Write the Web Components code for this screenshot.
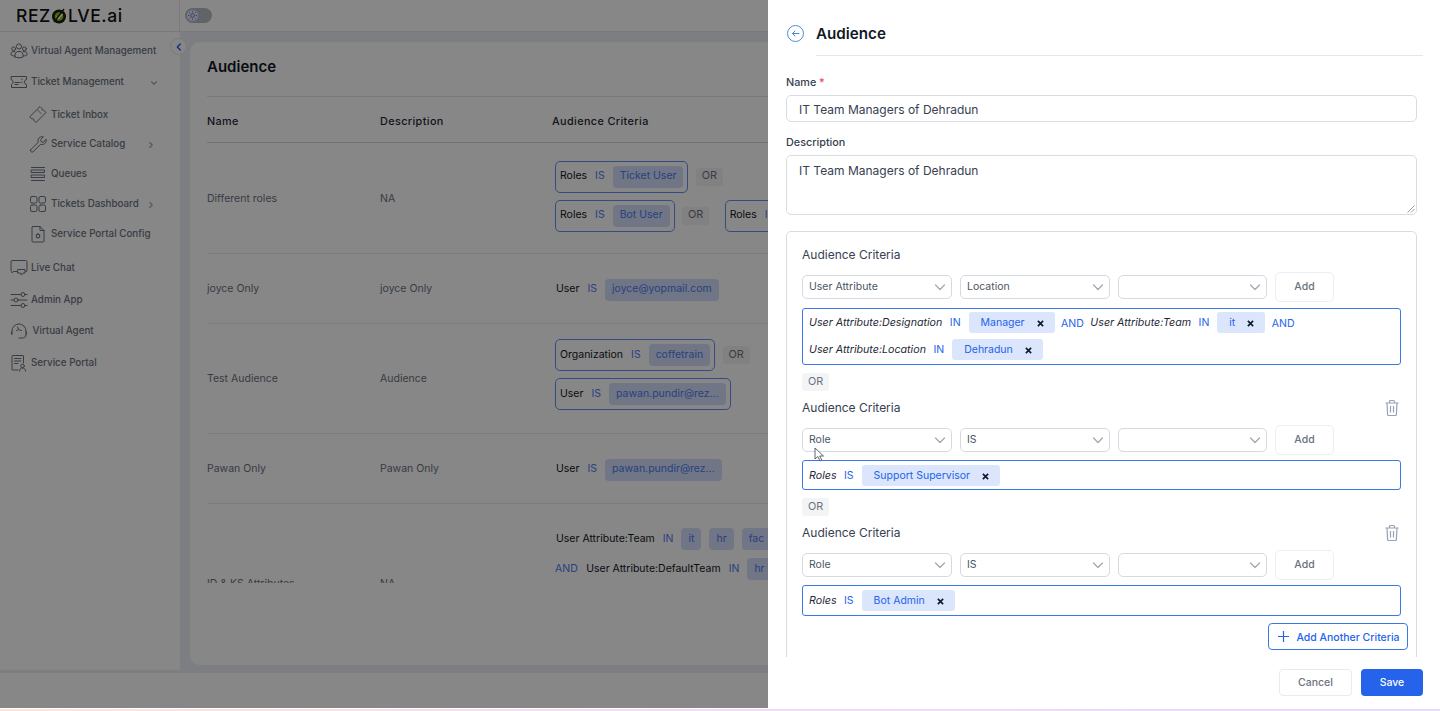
<!DOCTYPE html>
<html>
<head>
<meta charset="utf-8">
<title>Audience</title>
<style>
	html, body { margin: 0; height: 100%; overflow: hidden; font-family: Inter, "Liberation Sans", sans-serif; }
	.and { color: #4f7bef; }
</style>
</head>
<body>
<rz-app>
	<rz-sidebar slot="sidebar">
		<rz-nav icon="people" label="Virtual Agent Management"></rz-nav>
		<rz-nav icon="ticket" label="Ticket Management" caret="down"></rz-nav>
		<rz-nav icon="tag" label="Ticket Inbox" child before="1.500"></rz-nav>
		<rz-nav icon="wrench" label="Service Catalog" child caret="right"></rz-nav>
		<rz-nav icon="queues" label="Queues" child></rz-nav>
		<rz-nav icon="grid" label="Tickets Dashboard" child caret="right"></rz-nav>
		<rz-nav icon="doc" label="Service Portal Config" child></rz-nav>
		<rz-nav icon="chat" label="Live Chat" before="4"></rz-nav>
		<rz-nav icon="sliders" label="Admin App"></rz-nav>
		<rz-nav icon="agent" label="Virtual Agent" nudge="1.500"></rz-nav>
		<rz-nav icon="portal" label="Service Portal"></rz-nav>
	</rz-sidebar>

	<rz-table slot="main">
		<rz-row name="Different roles" desc="NA" h="111" lift="6">
			<div class="line"><rz-rule boxed attr="Roles" values="Ticket User"></rz-rule><rz-or></rz-or></div>
			<div class="line"><rz-rule boxed attr="Roles" values="Bot User"></rz-rule><rz-or spaced></rz-or><rz-rule boxed attr="Roles" values=""></rz-rule></div>
		</rz-row>
		<rz-row name="joyce Only" desc="joyce Only" h="70">
			<div class="line"><rz-rule attr="User" values="joyce@yopmail.com"></rz-rule></div>
		</rz-row>
		<rz-row name="Test Audience" desc="Audience" h="110" lift="10">
			<div class="line"><rz-rule boxed attr="Organization" values="coffetrain"></rz-rule><rz-or></rz-or></div>
			<div class="line"><rz-rule boxed attr="User" values="pawan.pundir@rez..."></rz-rule></div>
		</rz-row>
		<rz-row name="Pawan Only" desc="Pawan Only" h="70">
			<div class="line"><rz-rule attr="User" values="pawan.pundir@rez..."></rz-rule></div>
		</rz-row>
		<rz-row name="ID &amp; KS Attributes" desc="NA" h="160" top="22">
			<div class="line"><rz-rule attr="User Attribute:Team" op="IN" values="it|hr|fac"></rz-rule></div>
			<div class="line"><span class="and">AND</span><rz-rule attr="User Attribute:DefaultTeam" op="IN" values="hr"></rz-rule></div>
		</rz-row>
	</rz-table>
</rz-app>

<rz-drawer>
	<rz-criteria heading="Audience Criteria" first="User Attribute" second="Location" h="57">
		<rz-tag attr="User Attribute:Designation" op="IN" value="Manager"></rz-tag>
		<span class="join">AND</span>
		<rz-tag attr="User Attribute:Team" op="IN" value="it"></rz-tag>
		<span class="join">AND</span>
		<rz-tag attr="User Attribute:Location" op="IN" value="Dehradun"></rz-tag>
	</rz-criteria>
	<rz-or plain></rz-or>
	<rz-criteria heading="Audience Criteria" first="Role" second="IS" h="30" removable>
		<rz-tag attr="Roles" op="IS" value="Support Supervisor"></rz-tag>
	</rz-criteria>
	<rz-or plain></rz-or>
	<rz-criteria heading="Audience Criteria" first="Role" second="IS" h="31" removable>
		<rz-tag attr="Roles" op="IS" value="Bot Admin"></rz-tag>
	</rz-criteria>
</rz-drawer>

<script>
const ICONS = {
	people: '<circle cx="9" cy="4.500" r="2.600"/><circle cx="3.600" cy="6.800" r="1.900"/><circle cx="14.400" cy="6.800" r="1.900"/><path d="M5 15c-.6-3.400 1-5.600 4-5.600s4.600 2.200 4 5.600c-2.600 1.100-5.400 1.100-8 0z"/><path d="M5 9.700H3C1.500 9.700.7 11 1 13c.8.600 2 .9 3.600.9M13 9.700h2c1.500 0 2.300 1.300 2 3.300-.8.600-2 .9-3.600.9"/>',
	ticket: '<path d="M1.500 3.500h15v3.200c-1.200 0-2 .9-2 2.300s.8 2.300 2 2.300v3.200h-15v-3.200c1 0 1.500-1 1.500-2.300s-.5-2.300-1.500-2.300z"/><path d="M5 9.500h5M5 11.500h3M12 6v.8M12 9v.8"/>',
	tag: '<path d="M1 11.500L11 1.500l2.200 2.200c-.5 1.100.3 2 1.400 1.500L17 7.500 7 17.500l-2.200-2.200c.5-1.200-.5-2-1.500-1.500z"/><path d="M9 5.500l1 1M11 7.500l1 1"/>',
	wrench: '<path d="M1.500 15L9.200 7.400c-.7-2.300.2-4.600 2.300-5.400 1-.4 2-.4 2.900-.1l-2.700 2.600.5 2.300 2.300.5L17 4.200c.4 1 .3 2.200-.2 3.100-1 1.900-3.200 2.700-5.200 2l-7.700 7.700c-1 .9-3.200-.9-2.400-2z"/>',
	queues: '<path d="M2.500 2.500h13M2.500 5h13v2.500h-13zM2.500 10h13v2.500h-13zM2.500 15.500h13"/>',
	grid: '<rect x="1.500" y="1.500" width="6.500" height="6.500" rx="1.500"/><rect x="10" y="1.500" width="6.500" height="6.500" rx="1.500"/><rect x="1.500" y="10" width="6.500" height="6.500" rx="1.500"/><rect x="10" y="10" width="6.500" height="6.500" rx="1.500"/>',
	doc: '<path d="M4 1.500h7l4 4v10.500a1 1 0 0 1-1 1H4a1 1 0 0 1-1-1v-13.500a1 1 0 0 1 1-1z"/><path d="M11 1.500v4h4"/><path d="M9 8.500l.7 1.200h1.300l-.6 1.300.6 1.300H9.700L9 13.500l-.7-1.200H7l.6-1.300-.6-1.300h1.300z"/>',
	chat: '<path d="M2.500 1.500h13a1.500 1.500 0 0 1 1.500 1.500v8a1.500 1.500 0 0 1-1.500 1.500H16M7 12.500H3.500l-1.500 1.500V12.500a1.500 1.500 0 0 1-1-1.500V3a1.500 1.500 0 0 1 1.500-1.500"/><path d="M8 10.500h7v3.500h-2l-1.500 2-1-2H8z"/>',
	sliders: '<path d="M1 3.500h10M15 3.500h2M1 9h3M8 9h9M1 14.500h10M15 14.500h2"/><circle cx="13" cy="3.500" r="2"/><circle cx="6" cy="9" r="2"/><circle cx="13" cy="14.500" r="2"/>',
	agent: '<path d="M2 12V9a7 7 0 0 1 14 0v3"/><path d="M2 9.500c-1 .6-1 2.600 0 3.200M16 9.500c1 .6 1 2.600 0 3.200M16 13c0 2-1.500 3-4 3H9"/><path d="M6.500 8.500l1.500-.5M10 8l1.500.5M7.500 5l1.500 3"/>',
	portal: '<path d="M13.500 9V2a.5.500 0 0 0-.5-.5H2.500A.5.500 0 0 0 2 2v13.500a.5.500 0 0 0 .5.500H8"/><path d="M4.500 4.500h6.500M4.500 7h6.500M4.500 9.500h3.500"/><circle cx="12.500" cy="12" r="1.800"/><path d="M9.500 17c0-2 1.300-3 3-3s3 1 3 3"/>'
};

const chevron = (d, size, color, width) => `<svg width="${size}" height="${size}" viewBox="0 0 12 12" fill="none" stroke="${color}" stroke-width="${width || 1.300}" stroke-linecap="round" stroke-linejoin="round"><path d="${d}"/></svg>`;

class RzApp extends HTMLElement {
	constructor() {
		super();
		this.attachShadow({ mode: 'open' });
		this.shadowRoot.innerHTML = `
			<style>
				:host { display: flex; flex-direction: column; height: 711px; background: #ebeef5; color: #111827; }
				.top { flex: 0 0 31px; display: flex; background: #fff; border-bottom: 1px solid #e5e7eb; }
				.brand { flex: 0 0 180px; box-sizing: border-box; padding-left: 16px; border-right: 1px solid #e8e9ec; display: flex; align-items: center;
					font: 500 17.500px/1 Inter, "Liberation Sans", sans-serif; color: #111; letter-spacing: .6px; }
				.brand svg { margin: 0 1px 0 0; }
				.toggle-wrap { padding: 8px 0 0 5px; }
				.toggle { width: 27px; height: 15px; border-radius: 8px; background: #b7bcc5; display: flex; align-items: center; padding-left: 2px; box-sizing: border-box; }
				.knob { width: 11px; height: 11px; border-radius: 50%; background: #e8ecf8; display: flex; align-items: center; justify-content: center; }
				.mid { height: 639px; flex: none; display: flex; }
				.collapse { position: absolute; left: 170px; top: 38px; width: 17px; height: 17px; border-radius: 50%; background: #fff; border: 1px solid #e5e7eb; box-sizing: border-box; display: flex; align-items: center; justify-content: center; }
				.bottom { flex: 0 0 36px; margin-top: 2px; background: #fff; }
				.strip { flex: 0 0 3px; background: linear-gradient(90deg, #fbe6dc, #f0dcf4 50%, #e6dcf8); }
				.veil { position: absolute; left: 0; top: 0; right: 0; height: 708px; background: rgba(0, 0, 0, .47); }
			</style>
			<div class="top">
				<div class="brand">REZ<svg width="16" height="18" viewBox="0 0 16 18"><circle cx="8" cy="9.500" r="7" fill="#16210f"/><circle cx="8" cy="9.500" r="4.300" fill="#8fc31f"/><path d="M5.500 9.500l2 2 4-4.500" fill="none" stroke="#fff" stroke-width="1.400"/><path d="M3 15L13 2" stroke="#16210f" stroke-width="1.300"/></svg>LVE.ai</div>
				<div class="toggle-wrap"><div class="toggle"><div class="knob"><svg width="9" height="9" viewBox="0 0 10 10" fill="none" stroke="#4f6fd8" stroke-width="1"><circle cx="5" cy="5" r="2"/><path d="M5 0v1.500M5 8.500V10M0 5h1.500M8.500 5H10M1.500 1.500l1 1M7.500 7.500l1 1M8.500 1.500l-1 1M2.500 7.500l-1 1"/></svg></div></div></div>
			</div>
			<div class="mid"><slot name="sidebar"></slot><slot name="main"></slot></div>
			<div class="collapse">${chevron('M7.500 2.500L4 6l3.500 3.500', 10, '#2563eb', 1.800)}</div>
			<div class="bottom"></div>
			<div class="strip"></div>
			<div class="veil"></div>
		`;
	}
}
customElements.define('rz-app', RzApp);

class RzSidebar extends HTMLElement {
	constructor() {
		super();
		this.attachShadow({ mode: 'open' });
		this.shadowRoot.innerHTML = `
			<style>
				:host { display: block; flex: 0 0 180px; box-sizing: border-box; background: #fff; padding-top: 3px; height: 638px; }
			</style>
			<slot></slot>
		`;
	}
}
customElements.define('rz-sidebar', RzSidebar);

class RzNav extends HTMLElement {
	connectedCallback() {
		const child = this.hasAttribute('child');
		const caret = this.getAttribute('caret');
		const icon = ICONS[this.getAttribute('icon')];
		let caretSvg = '';
		if (caret === 'down') caretSvg = chevron('M3 4.500l3 3 3-3', 10, '#9ca3af');
		if (caret === 'right') caretSvg = chevron('M4.500 3l3 3-3 3', 10, '#9ca3af');
		this.attachShadow({ mode: 'open' }).innerHTML = `
			<style>
				:host { display: block; margin-top: ${this.getAttribute('before') || 0}px; }
				.item { display: flex; align-items: center; height: ${child ? 29.800 : 31.500}px; padding-left: ${child ? 29 : 10}px; gap: ${child ? 4 : 3}px; position: relative;
					font: 500 9.800px/1 Inter, "Liberation Sans", sans-serif; color: #6b7280; }
				.item > span:first-of-type { margin-left: ${this.getAttribute('nudge') || 0}px; }
				svg.ic { flex: none; width: 18px; height: 18px; fill: none; stroke: #6b7280; stroke-width: 1; stroke-linecap: round; stroke-linejoin: round; }
				.caret { position: absolute; right: ${caret === 'down' ? 21 : 24}px; top: 50%; margin-top: -4px; line-height: 0; }
			</style>
			<div class="item"><svg class="ic" viewBox="0 0 18 18">${icon}</svg><span>${this.getAttribute('label')}</span><span class="caret">${caretSvg}</span></div>
		`;
	}
}
customElements.define('rz-nav', RzNav);

class RzTable extends HTMLElement {
	constructor() {
		super();
		this.attachShadow({ mode: 'open' });
		this.shadowRoot.innerHTML = `
			<style>
				:host { display: block; flex: 0 0 588px; box-sizing: border-box; overflow: hidden; padding: 10px 0 0 10px; }
				.card { background: #fff; border-radius: 10px 0 0 10px; height: 623px; box-sizing: border-box; padding: 0 0 0 17px; overflow: hidden; }
				h2 { margin: 0; height: 55px; padding-bottom: 6px; display: flex; align-items: center; font: 600 15px/1 Inter, "Liberation Sans", sans-serif; color: #111827; border-bottom: 1px solid #e5e7eb; box-sizing: border-box; }
				.head { display: grid; grid-template-columns: 173px 172px 1fr; height: 46px; padding-top: 5px; align-items: center; border-bottom: 1px solid #d1d5db; box-sizing: border-box;
					font: 500 10.800px/1 Inter, "Liberation Sans", sans-serif; color: #1f2937; letter-spacing: .4px; }
				.rows { height: 440px; overflow: hidden; }
			</style>
			<div class="card">
				<h2>Audience</h2>
				<div class="head"><span>Name</span><span>Description</span><span>Audience Criteria</span></div>
				<div class="rows"><slot></slot></div>
			</div>
		`;
	}
}
customElements.define('rz-table', RzTable);

class RzRow extends HTMLElement {
	connectedCallback() {
		const top = this.getAttribute('top');
		this.attachShadow({ mode: 'open' }).innerHTML = `
			<style>
				:host { display: grid; grid-template-columns: 173px 172px 1fr; height: ${this.getAttribute('h')}px; box-sizing: border-box; padding-top: 2px; border-bottom: 1px solid #e9eaee; align-items: center;
					font: 400 10.500px/1 Inter, "Liberation Sans", sans-serif; color: #6b7280; }
				.crit { display: flex; flex-direction: column; gap: ${top ? 8 : 7}px; padding-left: 3px; min-width: 0; overflow: hidden;
					margin-bottom: ${this.getAttribute('lift') || 0}px; ${top ? `align-self: start; margin-top: ${top}px;` : ''} }
				::slotted(.line) { display: flex; align-items: center; gap: 7.500px; white-space: nowrap; }
			</style>
			<span>${this.getAttribute('name')}</span>
			<span>${this.getAttribute('desc')}</span>
			<div class="crit"><slot></slot></div>
		`;
	}
}
customElements.define('rz-row', RzRow);

class RzRule extends HTMLElement {
	connectedCallback() {
		const boxed = this.hasAttribute('boxed');
		const op = this.getAttribute('op') || 'IS';
		const list = this.getAttribute('values');
		const chips = list ? list.split('|').map(v => `<span class="chip">${v}</span>`).join('') : '';
		this.attachShadow({ mode: 'open' }).innerHTML = `
			<style>
				:host { display: inline-flex; flex: none; align-items: center; gap: 8px; height: ${boxed ? 32 : 22}px; box-sizing: border-box; padding: ${boxed ? '0 4px' : '0 0 0 1px'};
					${boxed ? 'border: 1px solid #6490f5; border-radius: 5px;' : ''}
					font: 400 10.500px/1 Inter, "Liberation Sans", sans-serif; }
				.attr { color: #111827; }
				.op { color: #4f7bef; }
				.chip { background: #d3dffb; color: #4f7bef; padding: 0 7px; height: 22px; display: inline-flex; align-items: center; border-radius: 4px; }
			</style>
			<span class="attr">${this.getAttribute('attr')}</span><span class="op">${op}</span>${chips}
		`;
	}
}
customElements.define('rz-rule', RzRule);

class RzOr extends HTMLElement {
	connectedCallback() {
		this.attachShadow({ mode: 'open' }).innerHTML = `
			<style>
				:host { display: inline-flex; width: 27px; height: 18px; flex: none; align-items: center; justify-content: center; background: #f3f4f6; color: #6b7280; border-radius: 3px;
					margin-right: ${this.hasAttribute('spaced') ? 8 : 0}px;
					font: 400 10.800px/1 Inter, "Liberation Sans", sans-serif; }
			</style>
			OR
		`;
	}
}
customElements.define('rz-or', RzOr);

class RzSelect extends HTMLElement {
	connectedCallback() {
		this.attachShadow({ mode: 'open' }).innerHTML = `
			<style>
				:host { display: flex; align-items: center; justify-content: space-between; height: 24px; box-sizing: border-box; border: 1px solid #d7d9e0; border-radius: 5px; padding: 0 5px 0 6px;
					font: 400 10.500px/1 Inter, "Liberation Sans", sans-serif; color: #4b5563; background: #fff; }
			</style>
			<span>${this.getAttribute('value') || ''}</span>${chevron('M1.500 4l4.500 4.500L10.500 4', 12, '#a3a8b2')}
		`;
	}
}
customElements.define('rz-select', RzSelect);

class RzTag extends HTMLElement {
	connectedCallback() {
		this.attachShadow({ mode: 'open' }).innerHTML = `
			<style>
				:host { display: inline-flex; align-items: center; gap: 7.500px; height: 21px; box-sizing: border-box; padding-top: 2px; font: 400 10.500px/1 Inter, "Liberation Sans", sans-serif; }
				.attr { font-style: italic; color: #1f2937; font-size: 10.700px; }
				.op { color: #2563eb; }
				.chip { display: inline-flex; align-items: center; box-sizing: border-box; height: 21px; margin: -2px 0 0 .5px; padding: 2px 11px 0 12px; gap: 12px; background: #dbe6fd; color: #2563eb; border-radius: 3px; }
			</style>
			<span class="attr">${this.getAttribute('attr')}</span><span class="op">${this.getAttribute('op')}</span>
			<span class="chip">${this.getAttribute('value')}<svg width="7" height="7" viewBox="0 0 8 8" stroke="#111827" stroke-width="1.900"><path d="M1 1l6 6M7 1L1 7"/></svg></span>
		`;
	}
}
customElements.define('rz-tag', RzTag);

class RzCriteria extends HTMLElement {
	connectedCallback() {
		const removable = this.hasAttribute('removable');
		const h = Number(this.getAttribute('h'));
		this.attachShadow({ mode: 'open' }).innerHTML = `
			<style>
				:host { display: block; }
				.title { display: flex; justify-content: space-between; align-items: center; height: 16px; padding-right: 1px; margin-bottom: 9px;
					font: 400 12px/18px Inter, "Liberation Sans", sans-serif; color: #374151; }
				.pick { display: grid; grid-template-columns: 150px 150px 149px 59px; gap: 8px; align-items: center; height: 28px; margin-bottom: ${h > 40 ? 8 : 7}px; }
				.add { height: 28px; border: 1px solid #eceef2; border-radius: 5px; display: flex; align-items: center; justify-content: center; font: 500 10.500px/1 Inter, "Liberation Sans", sans-serif; color: #6b7280; }
				.tags { box-sizing: border-box; height: ${h}px; border: 1px solid #3b78e7; border-radius: 3px; padding: ${h < 40 ? 4 : 3}px 6px 0; display: flex; flex-wrap: wrap; align-items: center; align-content: flex-start; gap: 6px 6.500px; }
				::slotted(.join) { font: 400 10.500px/23px Inter, "Liberation Sans", sans-serif; color: #2563eb; height: 21px; }
			</style>
			<div class="title"><span>${this.getAttribute('heading')}</span>${removable ? `<svg width="16" height="18" viewBox="0 0 16 18" fill="none" stroke="#94a3b8" stroke-width="1.200" stroke-linejoin="round"><path d="M1.500 4h13M5.500 4V2.500a1 1 0 0 1 1-1h3a1 1 0 0 1 1 1V4M3 4l.6 11.500a1 1 0 0 0 1 1h6.800a1 1 0 0 0 1-1L13 4M6.500 7v6.500M9.500 7v6.500"/></svg>` : ''}</div>
			<div class="pick">
				<rz-select value="${this.getAttribute('first')}"></rz-select>
				<rz-select value="${this.getAttribute('second')}"></rz-select>
				<rz-select></rz-select>
				<div class="add">Add</div>
			</div>
			<div class="tags"><slot></slot></div>
		`;
	}
}
customElements.define('rz-criteria', RzCriteria);

class RzDrawer extends HTMLElement {
	constructor() {
		super();
		this.attachShadow({ mode: 'open' });
		this.shadowRoot.innerHTML = `
			<style>
				:host { position: absolute; left: 768px; top: 0; width: 672px; height: 708px; box-sizing: border-box; background: #fff; display: flex; flex-direction: column; padding-left: 18px; font-family: Inter, "Liberation Sans", sans-serif; }
				.head { flex: 0 0 56px; box-sizing: border-box; display: flex; gap: 12px; padding-right: 17px; }
				.back { margin: 25px 0 0 1px; flex: none; width: 17px; height: 17px; }
				.title { flex: 1; height: 56px; box-sizing: border-box; border-bottom: 1px solid #e5e7eb; font: 600 15.200px/67px Inter, "Liberation Sans", sans-serif; color: #111827; }
				.body { flex: 0 0 601px; overflow: hidden; padding: 18px 23px 0 0; box-sizing: border-box; }
				label { display: block; height: 16px; font: 500 10.800px/18px Inter, "Liberation Sans", sans-serif; color: #374151; margin-bottom: 5px; }
				label b { color: #ef4444; font-weight: 500; }
				.field { box-sizing: border-box; border: 1px solid #d9dce3; border-radius: 5px; padding: 0 12px; font: 400 12px/1 Inter, "Liberation Sans", sans-serif; color: #374151; }
				.input { height: 27px; display: flex; align-items: center; padding-top: 2px; margin-bottom: 12px; }
				.area { height: 60px; padding-top: 7px; margin-bottom: 16px; position: relative; line-height: 16px; }
				.grip { position: absolute; right: 1px; bottom: 1px; }
				.box { box-sizing: border-box; height: 500px; border: 1px solid #d9dce3; border-radius: 5px; padding: 15px 15px 0; }
				::slotted(rz-or) { margin: 8px 0 9px; }
				.more { display: flex; justify-content: flex-end; margin: 7px -7px 0 0; }
				.more div { display: flex; align-items: center; gap: 6px; height: 27px; width: 140px; box-sizing: border-box; padding: 3px 0 0 1px; justify-content: center; border: 1px solid #3b78e7; border-radius: 4px; color: #2563eb; font: 500 10.500px/1 Inter, "Liberation Sans", sans-serif; }
				.more svg { margin-top: -3px; }
				.foot { flex: 1; display: flex; justify-content: flex-end; align-items: flex-start; gap: 9px; padding: 12px 17px 0 0; }
				.btn { height: 27px; display: flex; align-items: center; justify-content: center; box-sizing: border-box; padding-top: 2px; border-radius: 4px; font: 500 10.500px/1 Inter, "Liberation Sans", sans-serif; }
				.cancel { width: 73px; border: 1px solid #e9ebef; color: #6b7280; }
				.save { width: 62px; background: #2563eb; color: #fff; }
				.cursor { position: absolute; left: 46px; top: 447px; }
			</style>
			<div class="head">
				<svg class="back" viewBox="0 0 17 17" fill="none" stroke="#4a8bd0" stroke-width="1"><circle cx="8.500" cy="8.500" r="8"/><path d="M12 8.500H5.500M8 6l-2.500 2.500L8 11" stroke-linecap="round" stroke-linejoin="round"/></svg>
				<div class="title">Audience</div>
			</div>
			<div class="body">
				<label>Name <b>*</b></label>
				<div class="field input">IT Team Managers of Dehradun</div>
				<label>Description</label>
				<div class="field area">IT Team Managers of Dehradun
					<svg class="grip" width="8" height="8" viewBox="0 0 8 8" stroke="#9ca3af" stroke-width="1"><path d="M7.500 .5l-7 7M7.500 4l-3.500 3.500"/></svg>
				</div>
				<div class="box">
					<slot></slot>
					<div class="more"><div><svg width="13" height="13" viewBox="0 0 13 13" stroke="#2563eb" stroke-width="1.200"><path d="M6.500 1v11M1 6.500h11"/></svg>Add Another Criteria</div></div>
				</div>
			</div>
			<div class="foot">
				<div class="btn cancel">Cancel</div>
				<div class="btn save">Save</div>
			</div>
			<svg class="cursor" width="11" height="16" viewBox="0 0 11 16" fill="#fff" stroke="#374151" stroke-width=".8"><path d="M1 1v11l2.800-2.500L6 14l1.800-.8L5.700 9H9.500z"/></svg>
		`;
	}
}
customElements.define('rz-drawer', RzDrawer);
</script>
</body>
</html>
